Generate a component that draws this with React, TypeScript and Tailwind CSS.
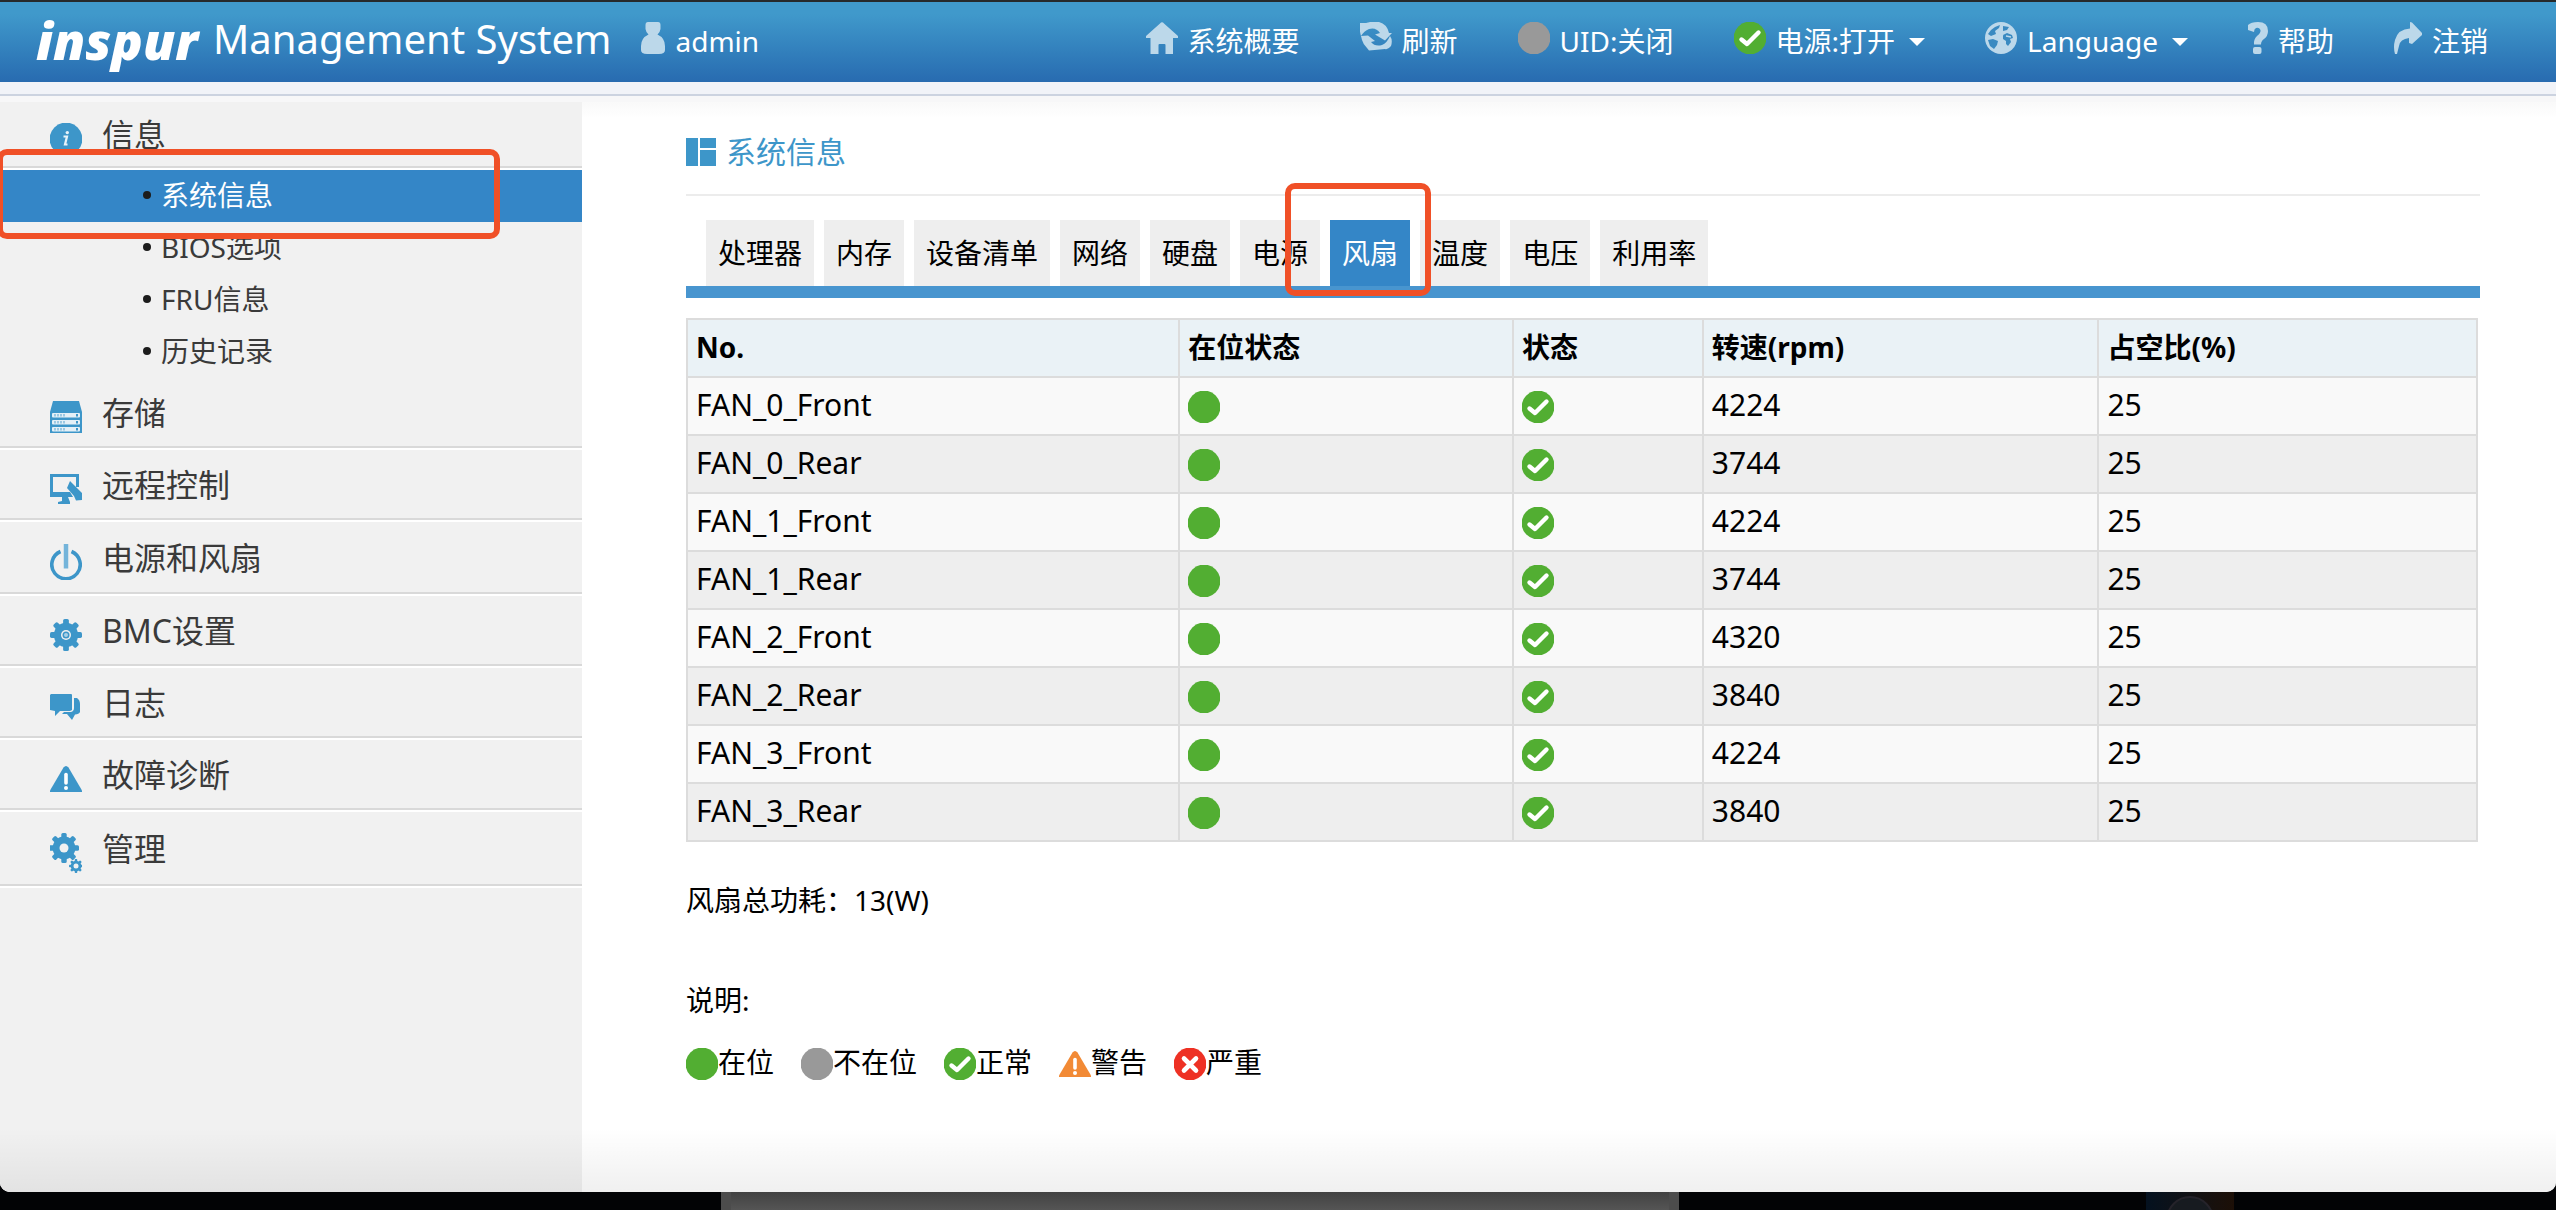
import type { ReactNode } from "react";

const font = "font-['Noto_Sans','Noto_Sans_CJK_SC',sans-serif]";

/* ---------- status icons ---------- */

function Disc({ color, children, size = 32 }: { color: string; children?: ReactNode; size?: number }) {
  return (
    <svg width={size} height={size} viewBox="0 0 32 32" className="shrink-0" aria-hidden="true">
      <circle cx="16" cy="16" r="16.4" fill={color} />
      {children}
    </svg>
  );
}

const Present = () => <Disc color="#52ae32" />;
const Absent = () => <Disc color="#999999" />;
const Normal = () => (
  <Disc color="#52ae32">
    <path d="M7.5 17.5 13 22 24.500 10.500" fill="none" stroke="#fff" strokeWidth="4.400" strokeLinecap="round" strokeLinejoin="round" />
  </Disc>
);
const Critical = () => (
  <Disc color="#ee3124">
    <path d="M10 10.500 22 22.500M22 10.500 10 22.500" fill="none" stroke="#fff" strokeWidth="4.600" strokeLinecap="round" />
  </Disc>
);

function Triangle({ color }: { color: string }) {
  return (
    <svg width="32" height="26" viewBox="0 0 32 26" className="shrink-0" aria-hidden="true">
      <path d="M13.500 1.500Q16-1.500 18.500 1.500L32 24.500V26H0V24.500Z" fill={color} />
      <path d="M16 8.500V17" stroke="#fff" strokeWidth="3.600" strokeLinecap="round" />
      <circle cx="16" cy="22" r="2" fill="#fff" />
    </svg>
  );
}

/* ---------- header icons ---------- */

const pale = "#bcd8ea";

const UserIcon = () => (
  <svg width="24" height="32" viewBox="0 0 24 32" aria-hidden="true">
    <path
      d="M7 0H17Q19.500 0 19.500 3V7Q19 10.500 16.500 12.500Q24 16 24 24V28Q24 32 18 32H6Q0 32 0 28V24Q0 16 7.500 12.500Q5 10.500 4.500 7V3Q4.500 0 7 0Z"
      fill={pale}
    />
  </svg>
);
const HomeIcon = () => (
  <svg width="32" height="32" viewBox="0 0 32 32" aria-hidden="true">
    <path d="M14 1.500Q16-1 18 1.500L32 14V16H27V32H19.500V23Q19.500 22 18.500 22H13.500Q12.500 22 12.500 23V32H4.500V16H0V14Z" fill={pale} />
  </svg>
);
const RefreshIcon = () => (
  <svg width="32" height="32" viewBox="0 0 32 32" aria-hidden="true">
    <path d="M0 1H6Q12-1 19 0Q27 2 29 11H32L25 18.500L15 12.500L20 11Q16 5 9 7Q4 9 1 14Q-1 7 0 1Z" fill={pale} />
    <path d="M1 14 8 13.500 15 19 11 20Q15 25 22 23Q27 21 30 14Q33 18 31 24Q28 28 25 27L20 27.500L9 28.500L7 26Q3 22 2 18Z" fill={pale} />
  </svg>
);
const GlobeIcon = () => (
  <svg width="32" height="32" viewBox="0 0 32 32" aria-hidden="true">
    <circle cx="16" cy="16" r="16" fill={pale} />
    <g fill="#3a8ac1">
      <path d="M6 8 10 5 15 3 14 6 10 9 11 12 6 14 3 12Z" />
      <path d="M3 18 8 17 13 19 12 23 9 27 5 24Z" />
      <path d="M18 4 24 5 22 8 18 9Z" />
      <path d="M18 13 22 11 27 13 28 16 25 17 26 20 23 24 21 22 21 19 18 17Z" />
    </g>
    <path d="M21 14 26 15M14 12 18 14" stroke={pale} strokeWidth="1.500" />
  </svg>
);
const HelpIcon = () => (
  <svg width="20" height="32" viewBox="0 0 20 32" aria-hidden="true">
    <path d="M0 8V3Q3 0 10 0Q20 0 20 9Q20 14 16 17Q13 19 13 22.500H6Q5.500 17 9 14Q13 11 12.500 8Q11 5 8 6Q6 7 6 10Z" fill={pale} />
    <rect x="5" y="25" width="8.500" height="7" rx="2" fill={pale} />
  </svg>
);
const LogoutIcon = () => (
  <svg width="28" height="32" viewBox="0 0 28 32" aria-hidden="true">
    <path d="M16 0 18 .5 28 11V13L18 22 15 21V16Q6 17 5 24L3 32H1Q-1 25 1 18Q4 7 16 6.500Z" fill={pale} />
  </svg>
);
const Caret = () => (
  <svg width="16" height="8" viewBox="0 0 16 8" className="ml-1" aria-hidden="true">
    <path d="M0 0H16L8 8Z" fill="#fff" />
  </svg>
);

/* ---------- sidebar icons ---------- */

const blue = "#3d96c9";
const angles = [0, 45, 90, 135, 180, 225, 270, 315];

function Gear({ cx, cy, r, hole }: { cx: number; cy: number; r: number; hole: number }) {
  return (
    <g fill={blue}>
      {angles.map((a) => (
        <rect key={a} x={cx - r * 0.18} y={cy - r} width={r * 0.36} height={r} rx={r * 0.1} transform={`rotate(${a} ${cx} ${cy})`} />
      ))}
      <circle cx={cx} cy={cy} r={r * 0.76} />
      <circle cx={cx} cy={cy} r={hole} fill="#f1f1f1" />
    </g>
  );
}

const InfoIcon = () => (
  <Disc color={blue}>
    <path d="M13.500 13.500H17L15 21.500H17.500" fill="none" stroke="#e8f3f9" strokeWidth="2.200" />
    <circle cx="17.300" cy="9.600" r="1.700" fill="#e8f3f9" />
  </Disc>
);
const StorageIcon = () => (
  <svg width="32" height="32" viewBox="0 0 32 32" aria-hidden="true">
    <path d="M3 0H29L32 11V32H0V11Z" fill={blue} />
    {[12, 19, 26].map((y) => (
      <g key={y}>
        <rect x="2" y={y} width="28" height="4.500" rx="1" fill="#e4f0f7" />
        <path d={`M4 ${y + 2.2}H15`} stroke="#9cc9e3" strokeWidth="2.500" strokeDasharray="2 1" />
        <rect x="26" y={y + 1} width="2" height="2.500" fill={blue} />
      </g>
    ))}
  </svg>
);
const RemoteIcon = () => (
  <svg width="32" height="30" viewBox="0 0 32 30" aria-hidden="true">
    <path d="M0 0H29V13H26V3H3V18H20L23 23H18L20 28V30H8V28L12 27V23H0Z" fill={blue} />
    <path d="M20 7 25 12 32 19V26L26 26.500L24 22 17 14Z" fill={blue} />
  </svg>
);
const PowerIcon = () => (
  <svg width="32" height="36" viewBox="0 0 32 36" aria-hidden="true">
    <path d="M10.500 7.500A14.200 14.200 0 1 0 21.500 7.500" fill="none" stroke={blue} strokeWidth="3.600" />
    <path d="M16 0V24.500" stroke="#74b4da" strokeWidth="4.500" />
  </svg>
);
const SettingsIcon = () => (
  <svg width="32" height="32" viewBox="0 0 32 32" aria-hidden="true">
    <Gear cx={16} cy={16} r={16} hole={5} />
    <circle cx="16" cy="16" r="3.500" fill={blue} />
    <circle cx="16" cy="16" r="2" fill="#a9d0e6" />
  </svg>
);
const LogIcon = () => (
  <svg width="32" height="26" viewBox="0 0 32 26" aria-hidden="true">
    <path d="M1 0H21Q22 0 22 1V16L20 17H10L5 22V17L0 16V1Z" fill={blue} />
    <path d="M24 4H27Q30 6 30 10V18Q29 20 25 20.500L22 26 17 20H12L14 18H21Q24 17 24 14Z" fill={blue} />
  </svg>
);
const ManageIcon = () => (
  <svg width="32" height="40" viewBox="0 0 32 40" aria-hidden="true">
    <Gear cx={14} cy={15} r={15} hole={4.5} />
    <Gear cx={26} cy={33} r={7} hole={2.5} />
  </svg>
);

/* ---------- data ---------- */

const subItems = ["系统信息", "BIOS选项", "FRU信息", "历史记录"];

const sections: { label: string; icon: ReactNode; height: string }[] = [
  { label: "存储", icon: <StorageIcon />, height: "h-[72px]" },
  { label: "远程控制", icon: <RemoteIcon />, height: "h-[72px]" },
  { label: "电源和风扇", icon: <PowerIcon />, height: "h-[74px]" },
  { label: "BMC设置", icon: <SettingsIcon />, height: "h-[72px]" },
  { label: "日志", icon: <LogIcon />, height: "h-[72px]" },
  { label: "故障诊断", icon: <Triangle color={blue} />, height: "h-[72px]" },
  { label: "管理", icon: <ManageIcon />, height: "h-[76px]" },
];

const tabs = ["处理器", "内存", "设备清单", "网络", "硬盘", "电源", "风扇", "温度", "电压", "利用率"];

const fans = [
  ["FAN_0_Front", 4224],
  ["FAN_0_Rear", 3744],
  ["FAN_1_Front", 4224],
  ["FAN_1_Rear", 3744],
  ["FAN_2_Front", 4320],
  ["FAN_2_Rear", 3840],
  ["FAN_3_Front", 4224],
  ["FAN_3_Rear", 3840],
] as const;

const legend: [ReactNode, string][] = [
  [<Present />, "在位"],
  [<Absent />, "不在位"],
  [<Normal />, "正常"],
  [<Triangle color="#f28a35" />, "警告"],
  [<Critical />, "严重"],
];

/* ---------- page parts ---------- */

function NavItem({ icon, label, menu }: { icon: ReactNode; label: string; menu?: boolean }) {
  const body = (
    <>
      <span className="pb-2">{icon}</span>
      <span className="pb-0.5">{label}</span>
      {menu && <Caret />}
    </>
  );
  const cls = "flex items-center gap-2.5 whitespace-nowrap";
  return menu ? (
    <button type="button" aria-haspopup="menu" className={cls}>
      {body}
    </button>
  ) : (
    <a href="#" className={cls}>
      {body}
    </a>
  );
}

function Header() {
  return (
    <header>
      <div className="flex h-[82px] items-center justify-between border-t-2 border-[#26292b] bg-linear-to-b from-[#4099cb] from-15% to-[#286bb0] pr-[68px] pl-9 text-[28px] leading-10 text-white">
        <div className="flex items-center">
          <span className="w-[177px] pb-1 text-[52px] leading-[60px] font-black italic">inspur</span>
          <h1 className="pb-1.5 text-[40px] leading-[52px]">Management System</h1>
          <a href="#" className="ml-[30px] flex items-center gap-2.5">
            <span className="pb-2">
              <UserIcon />
            </span>
            <span className="pb-0.5">admin</span>
          </a>
        </div>
        <nav className="flex items-center gap-[60px]">
          <NavItem icon={<HomeIcon />} label="系统概要" />
          <NavItem icon={<RefreshIcon />} label="刷新" />
          <NavItem icon={<Absent />} label="UID:关闭" />
          <NavItem icon={<Normal />} label="电源:打开" menu />
          <NavItem icon={<GlobeIcon />} label="Language" menu />
          <NavItem icon={<HelpIcon />} label="帮助" />
          <NavItem icon={<LogoutIcon />} label="注销" />
        </nav>
      </div>
      <div className="h-[14px] border-b-2 border-[#ccd3e0] bg-[#f1f3f8]" />
    </header>
  );
}

function Section({ icon, label, height }: { icon: ReactNode; label: string; height: string }) {
  return (
    <div className={`${height} border-b-2 border-white`}>
      <a href="#" className="flex h-full items-center gap-5 border-b-2 border-[#d9d9d9] pt-0.5 pl-[50px] text-[32px] leading-10 text-[#3a3a3a]">
        <span className="pt-2">{icon}</span>
        <span>{label}</span>
      </a>
    </div>
  );
}

function Sidebar() {
  return (
    <aside className="w-[582px] shrink-0 bg-[#f1f1f1]">
      <Section icon={<InfoIcon />} label="信息" height="h-[68px]" />
      <ul>
        {subItems.map((item, i) => (
          <li key={item} className="relative">
            <a
              href="#"
              className={`flex h-[52px] items-center gap-2.5 pb-0.5 pl-[143px] text-[28px] leading-10 ${
                i === 0 ? "bg-[#3486c7] text-white" : "text-[#3a3a3a]"
              }`}
            >
              <span className="size-2 rounded-full bg-[#1c1c1c]" />
              {item}
            </a>
            {i === 0 && (
              <span className="pointer-events-none absolute -top-[21px] -left-[3px] z-10 h-[90px] w-[503px] rounded-[10px] border-6 border-[#f05027]" />
            )}
          </li>
        ))}
      </ul>
      {sections.map((s) => (
        <Section key={s.label} {...s} />
      ))}
    </aside>
  );
}

function FanTable() {
  const cell = "border-2 border-[#dcdcdc] px-2";
  return (
    <div className="mt-5 pr-0.5">
      <table className="w-full table-fixed border-collapse text-left text-[30px] leading-9">
        <colgroup>
          <col className="w-[27.5%]" />
          <col className="w-[18.65%]" />
          <col className="w-[10.6%]" />
          <col className="w-[22.1%]" />
          <col />
        </colgroup>
        <thead>
          <tr className="h-[58px] bg-[#eaf2f6] text-[28px]">
            {["No.", "在位状态", "状态", "转速(rpm)", "占空比(%)"].map((h) => (
              <th key={h} scope="col" className={`${cell} pb-0.5 font-bold`}>
                {h}
              </th>
            ))}
          </tr>
        </thead>
        <tbody>
          {fans.map(([name, rpm]) => (
            <tr key={name} className="h-[58px] odd:bg-[#f9f9f9] even:bg-[#eeeeee]">
              <td className={`${cell} pb-0.5`}>{name}</td>
              <td className={`${cell} pt-0.5`}>
                <Present />
              </td>
              <td className={`${cell} pt-0.5`}>
                <Normal />
              </td>
              <td className={`${cell} pb-0.5`}>{rpm}</td>
              <td className={`${cell} pb-0.5`}>25</td>
            </tr>
          ))}
        </tbody>
      </table>
    </div>
  );
}

function Content() {
  return (
    <main className="min-w-0 flex-1 pt-[26px] pr-[76px] pl-[104px] text-[28px] leading-10">
      <div className="flex h-[68px] items-start gap-2.5 border-b-2 border-[#ececec] text-[30px] leading-[48px] text-[#3d96c9]">
        <svg width="30" height="28" viewBox="0 0 30 28" className="mt-2.5" aria-hidden="true">
          <path d="M0 0H12V28H0ZM14 0H30V10H14ZM14 12H30V28H14Z" fill={blue} />
        </svg>
        <h2>系统信息</h2>
      </div>
      <div role="tablist" className="mt-6 flex gap-2.5 border-b-12 border-[#4895cf] pl-5">
        {tabs.map((t) => {
          const active = t === "风扇";
          return (
            <div key={t} className="relative">
              <button
                type="button"
                role="tab"
                aria-selected={active}
                className={`h-[66px] px-3 whitespace-nowrap ${active ? "bg-[#3486c7] text-white" : "bg-[#eeeeee]"}`}
              >
                {t}
              </button>
              {active && (
                <span className="pointer-events-none absolute -top-[37px] -left-[45px] z-10 h-[113px] w-[146px] rounded-[10px] border-6 border-[#f05027]" />
              )}
            </div>
          );
        })}
      </div>
      <FanTable />
      <p className="mt-[38px]">风扇总功耗：13(W)</p>
      <p className="mt-[60px]">说明:</p>
      <ul className="mt-[22px] flex gap-[27px]">
        {legend.map(([icon, label]) => (
          <li key={label} className="flex items-center">
            <span className="pt-1">{icon}</span>
            {label}
          </li>
        ))}
      </ul>
    </main>
  );
}

export default function App() {
  return (
    <div className={`${font} flex min-h-screen flex-col bg-[#020305] text-black`}>
      <div className="relative flex flex-1 flex-col overflow-hidden rounded-b-[10px] bg-white">
        <Header />
        <div className="h-1.5 bg-[#f7f7f8]" />
        <div className="flex flex-1 bg-linear-to-b from-[#f9f9f9] to-white to-[16px]">
          <Sidebar />
          <Content />
        </div>
        <div className="pointer-events-none absolute inset-x-0 bottom-0 h-16 bg-linear-to-t from-black/6 to-transparent" />
      </div>
      <div className="flex h-[18px]">
        <div className="w-[28.2%]" />
        <div className="w-[37.5%] border-x-10 border-[#4c4c4c] bg-linear-to-b from-[#424242] to-[#555555]" />
        <div className="flex flex-1 justify-center">
          <div className="ml-36 h-full w-[88px] overflow-hidden bg-linear-to-r from-[#04111f] to-[#1c0f07]">
            <div className="mx-auto mt-1 size-12 rounded-full border-2 border-[#25232a] bg-[#171b20]" />
          </div>
        </div>
      </div>
    </div>
  );
}
